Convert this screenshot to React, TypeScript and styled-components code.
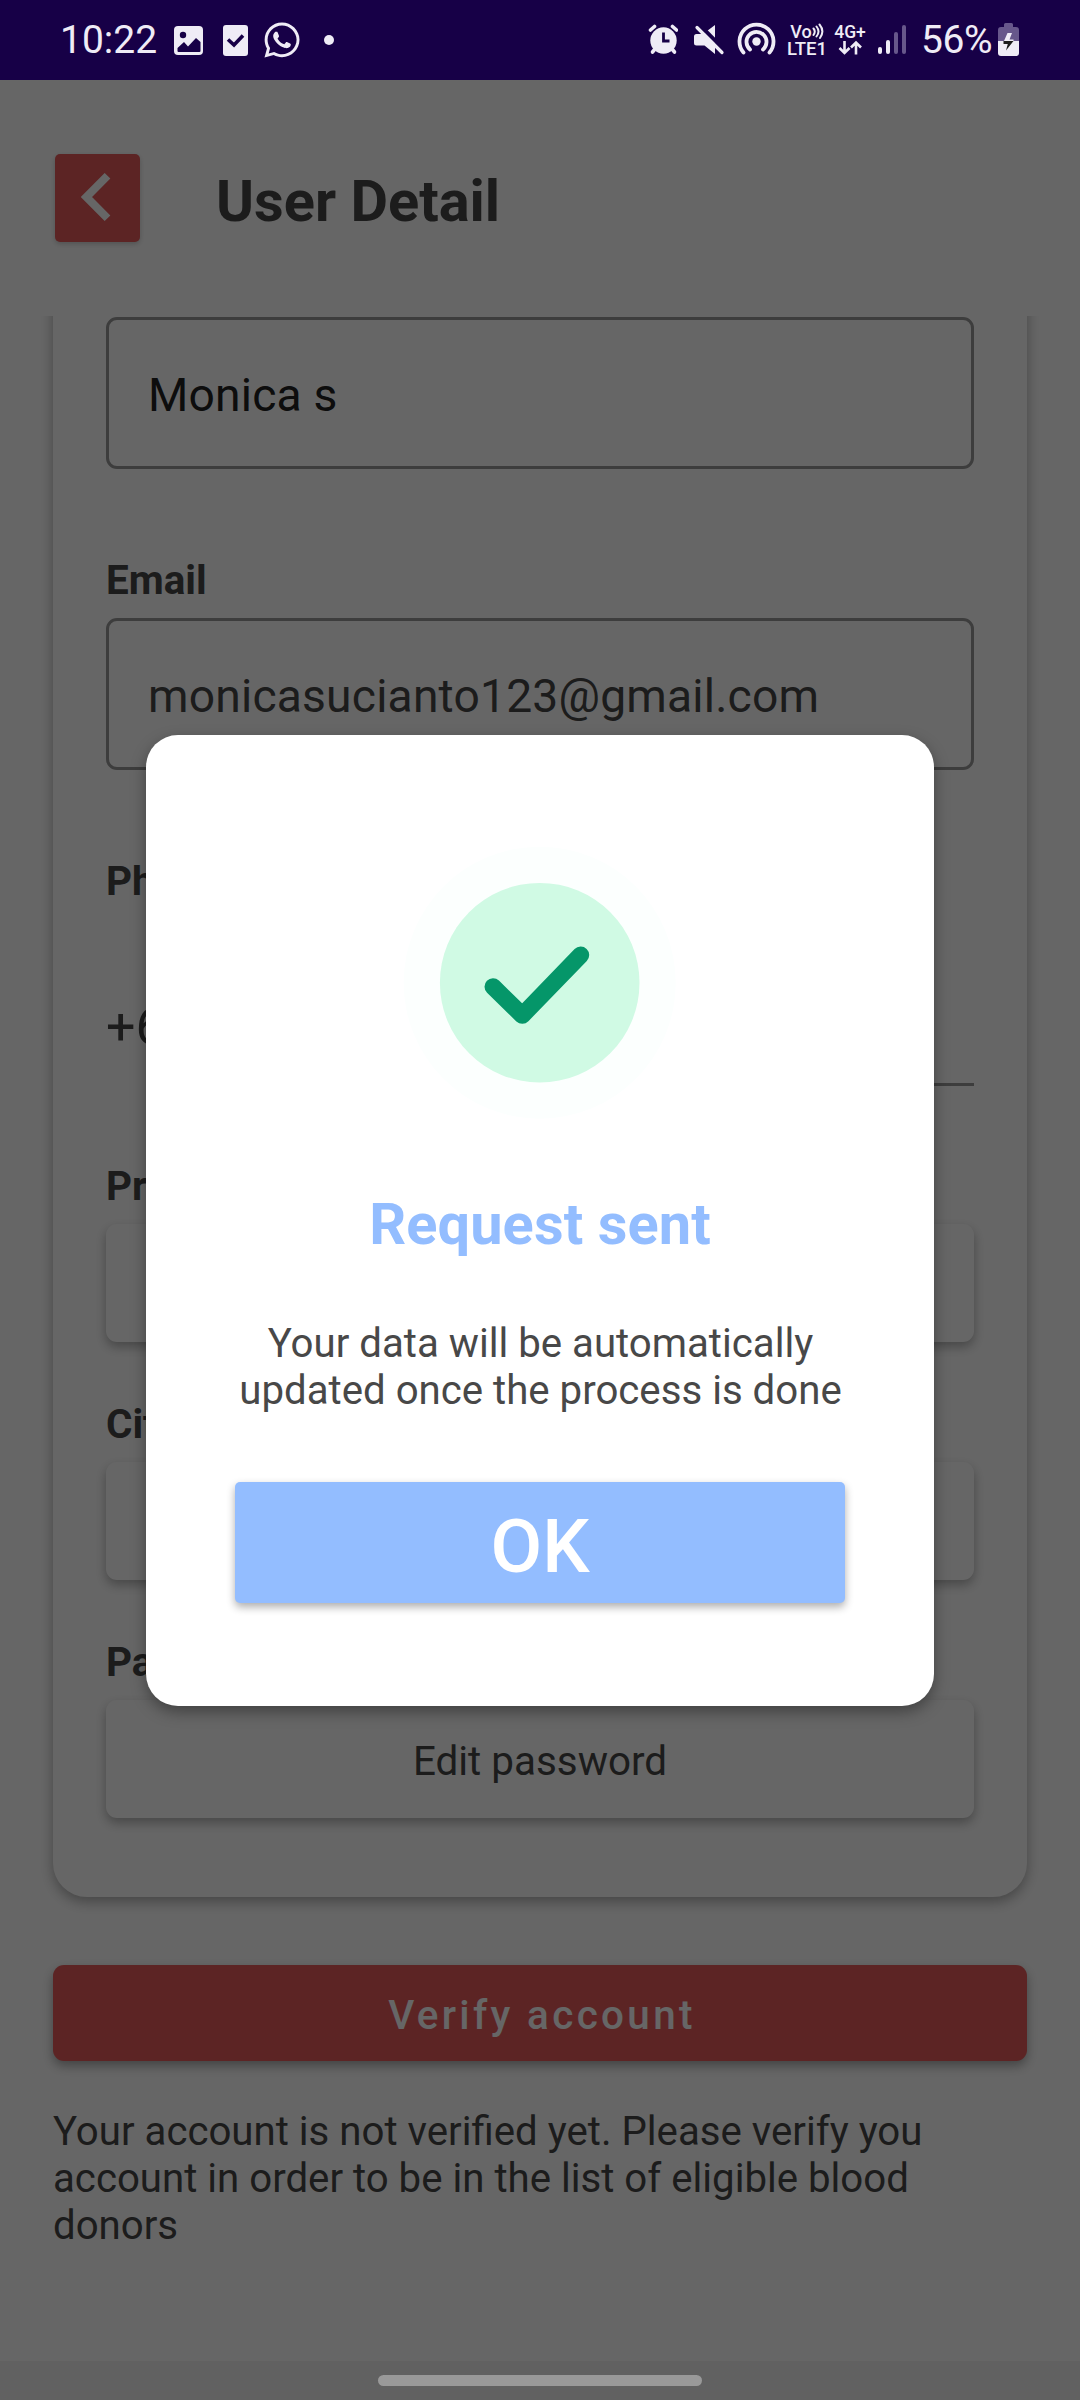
import React from 'react';
import styled, { createGlobalStyle } from 'styled-components';
import { FaWhatsapp } from 'react-icons/fa';

const GlobalStyle = createGlobalStyle`
  * { box-sizing: border-box; }
  body {
    margin: 0;
    background: #fff;
    font-family: Roboto, "Noto Sans", sans-serif;
  }
  button { font-family: inherit; border: 0; }
`;

const INK = '#474747';
const STATUS_FG = '#efecf6';
const STATUS_BG = '#170047';

const Screen = styled.div`
  position: relative;
  display: flex;
  flex-direction: column;
  width: 1080px;
  height: 2400px;
  overflow: hidden;
  background: #fff;
`;

/* ---------- status bar ---------- */

const StatusBar = styled.header`
  display: flex;
  justify-content: space-between;
  height: 80px;
  flex: none;
  padding: 0 60px;
  background: ${STATUS_BG};
  color: ${STATUS_FG};
`;

const StatusGroup = styled.div`
  display: flex;
  align-items: flex-start;
  height: 80px;
`;

const StatusText = styled.span<{ $width: number; $gap?: number; $spacing?: number }>`
  width: ${(p) => p.$width}px;
  margin-left: ${(p) => p.$gap ?? 0}px;
  padding-top: 17px;
  font-size: 39px;
  line-height: 47px;
  letter-spacing: ${(p) => p.$spacing ?? 0}px;
  white-space: nowrap;
`;

const Glyph = styled.svg<{ $gap?: number }>`
  display: block;
  flex: none;
  margin-left: ${(p) => p.$gap ?? 0}px;
`;

const WhatsApp = styled(FaWhatsapp)`
  flex: none;
  margin: 20px 0 0 14px;
  width: 40px;
  height: 40px;
`;

const NetLabel = styled.div<{ $width: number; $gap: number }>`
  display: flex;
  flex-direction: column;
  align-items: center;
  width: ${(p) => p.$width}px;
  margin-left: ${(p) => p.$gap}px;
  padding-top: 23px;
`;

const NetLine = styled.span<{ $size: number }>`
  display: flex;
  align-items: center;
  height: 17px;
  font-size: ${(p) => p.$size}px;
  font-weight: 500;
  line-height: 20px;
  white-space: nowrap;
`;

/* ---------- page ---------- */

const TopBar = styled.div`
  display: flex;
  align-items: flex-start;
  flex: none;
  height: 236px;
  padding: 74px 55px 0;
`;

const BackButton = styled.button`
  display: flex;
  align-items: center;
  justify-content: center;
  width: 85px;
  height: 88px;
  padding: 0 3px 2px 0;
  border-radius: 5px;
  background: #e65a5a;
  box-shadow: 0 2px 5px rgba(0, 0, 0, 0.2);
`;

const Title = styled.h1`
  margin: 13px 0 0 76px;
  color: ${INK};
  font-size: 57.75px;
  font-weight: 700;
  line-height: 68px;
`;

const Scroller = styled.main`
  flex: 1;
  min-height: 0;
  padding: 0 53px;
  overflow: hidden;
`;

/* The list is scrolled, so the card begins above the visible area. */
const Card = styled.section`
  display: flex;
  flex-direction: column;
  margin-top: -60px;
  padding: 61px 53px 79px;
  border-radius: 34px;
  background: #fff;
  box-shadow: 0 5px 13px rgba(0, 0, 0, 0.32);
`;

const Field = styled.div<{ $gap: number }>`
  display: flex;
  flex-direction: column;
  margin-top: ${(p) => p.$gap}px;
`;

const Label = styled.label`
  height: 47px;
  color: ${INK};
  font-size: 40.4px;
  font-weight: 700;
  line-height: 47px;
`;

const Input = styled.div<{ $color: string; $gap?: number }>`
  height: 152px;
  margin-top: ${(p) => p.$gap ?? 0}px;
  padding: 48px 39px 0;
  border: 3px solid #989898;
  border-radius: 11px;
  color: ${(p) => p.$color};
  font-size: 46.2px;
  line-height: 54px;
  letter-spacing: 0.2px;
`;

const PhoneRow = styled.div`
  display: flex;
  align-items: stretch;
  height: 181px;
`;

const CountryCode = styled.span`
  width: 180px;
  padding-top: 91px;
  color: ${INK};
  font-size: 52px;
  line-height: 61px;
`;

const PhoneInput = styled.div`
  flex: 1;
  border-bottom: 3px solid #989898;
`;

const PickerButton = styled.button`
  height: 118px;
  margin-top: 14px;
  padding: 5px 0 0;
  border-radius: 11px;
  background: #fff;
  color: ${INK};
  font-size: 40.4px;
  line-height: 47px;
  box-shadow: 0 5px 11px rgba(0, 0, 0, 0.3);
`;

const VerifyButton = styled.button`
  display: block;
  width: 100%;
  height: 96px;
  margin-top: 68px;
  padding: 4px 0 0 4px;
  border-radius: 11px;
  background: #e65a5a;
  color: #fff;
  font-size: 40.4px;
  font-weight: 500;
  line-height: 47px;
  letter-spacing: 3.35px;
  box-shadow: 0 5px 11px rgba(0, 0, 0, 0.34);
`;

const Note = styled.p`
  margin: 47px 0 0;
  color: ${INK};
  font-size: 40.2px;
  line-height: 47px;
`;

const NavBar = styled.footer`
  display: flex;
  justify-content: center;
  flex: none;
  height: 39px;
  padding-top: 14px;
  background: #616161;
`;

const NavPill = styled.span`
  width: 324px;
  height: 11px;
  border-radius: 6px;
  background: #999;
`;

/* ---------- dialog ---------- */

const Backdrop = styled.div`
  position: absolute;
  inset: 80px 0 39px;
  display: flex;
  align-items: center;
  justify-content: center;
  background: rgba(0, 0, 0, 0.6);
`;

const Dialog = styled.div`
  display: flex;
  flex-direction: column;
  align-items: center;
  width: 788px;
  height: 971px;
  padding: 110px 89px 0;
  border-radius: 32px;
  background: #fff;
  box-shadow: 0 6px 15px rgba(0, 0, 0, 0.36);
`;

const DialogTitle = styled.h2`
  margin: 69px 0 0;
  color: #93bdff;
  font-size: 57.75px;
  font-weight: 700;
  line-height: 68px;
  letter-spacing: 0.08px;
`;

const DialogText = styled.p`
  margin: 62px 0 0 1px;
  color: #484848;
  font-size: 40.2px;
  line-height: 47px;
  text-align: center;
  white-space: nowrap;
`;

const OkButton = styled.button`
  width: 610px;
  height: 121px;
  margin-top: 68px;
  padding: 6px 0 0;
  border-radius: 5px;
  background: #93bdff;
  color: #fff;
  font-size: 75px;
  font-weight: 500;
  line-height: 88px;
  box-shadow: 0 4px 8px rgba(0, 0, 0, 0.32);
`;

const SuccessMark = () => (
  <Glyph width="276" height="276" viewBox="402 845 276 276" fill="none">
    <circle cx="539.7" cy="982.7" r="136" fill="#fcfffe" />
    <circle cx="539.7" cy="982.7" r="99.800" fill="#d0fae4" />
    <path
      d="M493 986.7 522.3 1015.3 580.7 955"
      stroke="#059669"
      strokeWidth="17"
      strokeLinecap="round"
      strokeLinejoin="round"
    />
  </Glyph>
);

const StatusLeft = () => (
  <StatusGroup>
    <StatusText $width={114}>10:22</StatusText>
    <Glyph width="29" height="80" viewBox="174 0 29 80">
      <rect x="174" y="26" width="29" height="29" rx="4" fill={STATUS_FG} />
      <circle cx="183" cy="35" r="3.2" fill={STATUS_BG} />
      <path d="M177.500 48 184 42l4 4.500 8-8.500 4.500 4V51q0 1-1 1H178.500q-1 0-1-1z" fill={STATUS_BG} />
    </Glyph>
    <Glyph $gap={20} width="25" height="80" viewBox="223 0 25 80">
      <rect x="223" y="25" width="25" height="31" rx="3" fill={STATUS_FG} />
      <path d="M228 39.500 234 45 243 35.500" stroke={STATUS_BG} strokeWidth="3.600" fill="none" />
    </Glyph>
    <WhatsApp />
    <Glyph $gap={20} width="14" height="80" viewBox="322 0 14 80">
      <circle cx="329" cy="40" r="5" fill={STATUS_FG} />
    </Glyph>
  </StatusGroup>
);

const StatusRight = () => (
  <StatusGroup>
    <Glyph width="30" height="80" viewBox="648 0 30 80" fill="none" stroke={STATUS_FG}>
      <circle cx="663.500" cy="40.500" r="13.200" fill={STATUS_FG} stroke="none" />
      <path d="M650.500 30 654.500 26.500M676.500 30 672.500 26.500" strokeWidth="3.600" strokeLinecap="round" />
      <path d="M655 49 652.500 52M672 49 674.500 52" strokeWidth="3.600" strokeLinecap="round" />
      <path d="M663.500 32.500V41H669.500" stroke={STATUS_BG} strokeWidth="2.800" />
    </Glyph>
    <Glyph $gap={15} width="32" height="80" viewBox="693 0 32 80">
      <path
        d="M696.500 34H703L715 25V54L704.500 45.500H696.500Q694 45.500 694 43V36.500Q694 34 696.500 34Z"
        fill={STATUS_FG}
      />
      <path d="M699 24.500 725 50.500" stroke={STATUS_BG} strokeWidth="4" />
      <path d="M697 27.500 722 52.500" stroke={STATUS_FG} strokeWidth="3.200" strokeLinecap="round" />
    </Glyph>
    <Glyph $gap={12} width="40" height="80" viewBox="737 0 40 80" fill="none" stroke={STATUS_FG} strokeWidth="3.800" strokeLinecap="round">
      <circle cx="756.500" cy="41.500" r="4.200" fill={STATUS_FG} stroke="none" />
      <path d="M750 49.500A10 10 0 1 1 763 49.500" />
      <path d="M743.500 52.500A17 17 0 1 1 769.500 52.500" />
    </Glyph>
    <NetLabel $gap={10} $width={40}>
      <NetLine $size={18}>
        Vo
        <svg width="12" height="17" viewBox="0 0 12 17" fill="none" stroke={STATUS_FG} strokeWidth="2" strokeLinecap="round">
          <path d="M1.500 5.500Q4 8.500 1.500 12M4.500 3.500Q8.500 8.500 4.500 13.500M7.500 1.500Q13 8 8 15" />
        </svg>
      </NetLine>
      <NetLine $size={18.5}>LTE1</NetLine>
    </NetLabel>
    <NetLabel $gap={4} $width={38}>
      <NetLine $size={17.5}>4G+</NetLine>
      <svg width="24" height="16" viewBox="838 41 24 16" fill="none" stroke={STATUS_FG} strokeWidth="2.600">
        <path d="M844.500 42V54M839.500 49 844.500 54 849.500 49" />
        <path d="M856 55.500V43.500M851 48.500 856 43.500 861 48.500" />
      </svg>
    </NetLabel>
    <Glyph $gap={9} width="29" height="80" viewBox="878 0 29 80">
      <rect x="878" y="47" width="4" height="7" rx="2" fill={STATUS_FG} />
      <rect x="886" y="40" width="4" height="14" rx="2" fill={STATUS_FG} />
      <rect x="894" y="32" width="4" height="22" rx="2" fill="#67578b" />
      <rect x="902" y="25" width="4" height="29" rx="2" fill="#67578b" />
    </Glyph>
    <StatusText $width={77} $gap={14} $spacing={-0.4}>56%</StatusText>
    <Glyph width="22" height="80" viewBox="999 0 22 80">
      <path d="M1005 24.500Q1005 23 1006.500 23H1012.500Q1014 23 1014 24.500V27H1017Q1020 27 1020 30V42H999V30Q999 27 1002 27H1005Z" fill="#67578b" />
      <path d="M999 41H1020V53Q1020 56 1017 56H1002Q999 56 999 53Z" fill={STATUS_FG} />
      <path d="M1008.500 33 1013 33 1010.500 39.500H1014.500V41H1005Z" fill={STATUS_FG} />
      <path d="M1004.500 41H1014.500L1007 50.500 1008.800 44H1004.500Z" fill="#1c1c1c" />
    </Glyph>
  </StatusGroup>
);

export default function App() {
  return (
    <Screen>
      <GlobalStyle />
      <StatusBar>
        <StatusLeft />
        <StatusRight />
      </StatusBar>

      <TopBar>
        <BackButton aria-label="Back">
          <svg width="30" height="48" viewBox="0 0 30 48" fill="none" stroke="#fff" strokeWidth="8">
            <path d="M26.500 2.800 5.500 24 26.500 45.200" />
          </svg>
        </BackButton>
        <Title>User Detail</Title>
      </TopBar>

      <Scroller>
        <Card>
          <Input $color="#212121">Monica s</Input>
          <Field $gap={88}>
            <Label>Email</Label>
            <Input $color={INK} $gap={14}>monicasucianto123@gmail.com</Input>
          </Field>
          <Field $gap={88}>
            <Label>Phone</Label>
            <PhoneRow>
              <CountryCode>+62</CountryCode>
              <PhoneInput />
            </PhoneRow>
          </Field>
          <Field $gap={77}>
            <Label>Province</Label>
            <PickerButton />
          </Field>
          <Field $gap={59}>
            <Label>City</Label>
            <PickerButton />
          </Field>
          <Field $gap={59}>
            <Label>Password</Label>
            <PickerButton>Edit password</PickerButton>
          </Field>
        </Card>
        <VerifyButton>Verify account</VerifyButton>
        <Note>
          Your account is not verified yet. Please verify you
          <br />
          account in order to be in the list of eligible blood
          <br />
          donors
        </Note>
      </Scroller>

      <NavBar>
        <NavPill />
      </NavBar>

      <Backdrop>
        <Dialog role="dialog">
          <SuccessMark />
          <DialogTitle>Request sent</DialogTitle>
          <DialogText>
            Your data will be automatically
            <br />
            updated once the process is done
          </DialogText>
          <OkButton>OK</OkButton>
        </Dialog>
      </Backdrop>
    </Screen>
  );
}
